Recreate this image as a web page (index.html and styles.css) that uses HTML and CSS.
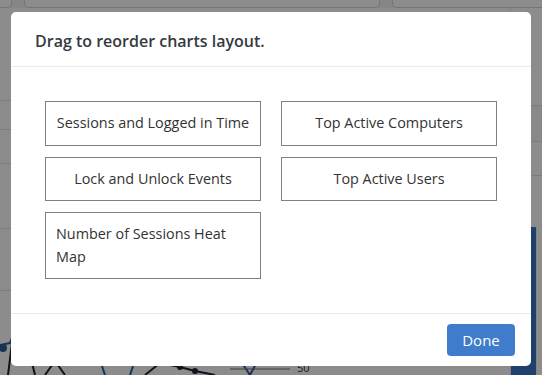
FILE: index.html
```html
<!DOCTYPE html>
<html lang="en">
<head>
<meta charset="utf-8">
<title>Reorder charts</title>
<link rel="stylesheet" href="styles.css">
</head>
<body>
<div class="dash">
  <div class="tiles">
    <div class="tile tile-a"></div>
    <div class="tile tile-b"></div>
    <div class="tile tile-c"></div>
  </div>
  <div class="panels">
    <div class="panel panel-left">
      <div class="prow prow-head"></div>
      <div class="prow prow-cell"><span class="bgtext">2</span></div>
      <div class="prow prow-a"></div>
      <div class="prow prow-b"></div>
      <div class="prow prow-c"></div>
      <svg class="chart" width="330" height="60" viewBox="0 0 330 60">
        <polyline points="0,30 10,28 30,-20" fill="none" stroke="#2d5a9c" stroke-width="2"/>
        <circle cx="3" cy="33" r="4" fill="#2d5a9c"/>
        <polyline points="8,60 12,28 20,-10" fill="none" stroke="#1a2433" stroke-width="2"/>
        <polyline points="35,60 30,40" fill="none" stroke="#1a2433" stroke-width="2"/>
        <polyline points="45,60 55,46 65,60" fill="none" stroke="#1a2433" stroke-width="2"/>
        <circle cx="55" cy="46" r="3" fill="#1a2433"/>
        <polyline points="100,45 105,60" fill="none" stroke="#2d5a9c" stroke-width="2"/>
        <polyline points="135,45 130,60" fill="none" stroke="#2d5a9c" stroke-width="2"/>
        <polyline points="145,60 160,48 180,52 195,56 215,60" fill="none" stroke="#1a2433" stroke-width="2"/>
        <circle cx="160" cy="48" r="3" fill="#1a2433"/>
        <circle cx="180" cy="52" r="3" fill="#1a2433"/>
        <circle cx="195" cy="56" r="3" fill="#1a2433"/>
        <polyline points="240,45 250,60 258,45" fill="none" stroke="#2d5a9c" stroke-width="2"/>
        <line x1="230" y1="54" x2="290" y2="54" stroke="#777" stroke-width="1"/>
        <text x="297" y="57" class="axis">50</text>
      </svg>
    </div>
    <div class="panel panel-right">
      <div class="prow prow-head2"></div>
      <div class="prow prow-cell2"><span class="bgtext">p</span></div>
      <div class="prow prow-d"></div>
      <div class="barwrap"><div class="bar"></div><div class="barrest"></div></div>
    </div>
  </div>
</div>

<div class="backdrop"></div>

<div class="modal" role="dialog" aria-labelledby="modal-title">
  <div class="modal-header">
    <h5 class="modal-title" id="modal-title">Drag to reorder charts layout.</h5>
  </div>
  <div class="modal-body">
    <div class="chart-grid">
      <div class="chart-item"><span>Sessions and Logged in Time</span></div>
      <div class="chart-item"><span>Top Active Computers</span></div>
      <div class="chart-item"><span>Lock and Unlock Events</span></div>
      <div class="chart-item"><span>Top Active Users</span></div>
      <div class="chart-item"><span>Number of Sessions Heat Map</span></div>
    </div>
  </div>
  <div class="modal-footer">
    <button class="btn-done" type="button">Done</button>
  </div>
</div>
</body>
</html>
```
FILE: styles.css
```css
* { box-sizing: border-box; }

html, body {
  margin: 0;
  padding: 0;
  width: 542px;
  height: 375px;
  overflow: hidden;
}

body {
  background: #f4f5f7;
  font-family: "Open Sans", "Noto Sans", "Liberation Sans", sans-serif;
  color: #333;
  position: relative;
}

/* ---------- background dashboard ---------- */
.dash {
  width: 542px;
  height: 375px;
  display: flex;
  flex-direction: column;
}

.tiles {
  display: flex;
  gap: 12px;
  height: 8px;
  flex: none;
}
.tile {
  background: #ffffff;
  border: 1px solid #d4d4d4;
  border-top: none;
  border-radius: 0 0 5px 5px;
}
.tile-a { width: 12px; border-left: none; border-radius: 0 0 5px 0; }
.tile-b { width: 356px; }
.tile-c { flex: 1; border-right: none; border-radius: 0 0 0 5px; }

.panels {
  flex: 1;
  display: flex;
}
.panel {
  background: #ffffff;
  position: relative;
  display: flex;
  flex-direction: column;
}
.panel-left {
  width: 510px;
  flex: none;
}
.panel-right {
  flex: 1;
  border-left: 1px solid #ececec;
}

.prow {
  border-bottom: 1px solid #e2e2e2;
  flex: none;
}
.prow-head { height: 93px; }
.prow-cell { height: 29px; position: relative; }
.prow-a { height: 34px; }
.prow-b { height: 65px; }
.prow-c { height: 62px; }
.prow-head2 { height: 98px; }
.prow-cell2 { height: 36px; background: #fafafa; position: relative; }
.prow-d { height: 34px; }

.bgtext {
  position: absolute;
  left: 16px;
  top: 4px;
  font-size: 17px;
  color: #333;
}
.prow-cell2 .bgtext { left: 0; top: 6px; }

.chart {
  margin-top: auto;
  display: block;
}
.axis {
  font-family: "Open Sans", sans-serif;
  font-size: 11px;
  fill: #333;
}

.barwrap {
  flex: 1;
  display: flex;
  align-items: stretch;
  padding-top: 51px;
}
.bar {
  width: 25px;
  background: #3a73c6;
}
.barrest { flex: 1; border-left: 1px solid #eee; }

.backdrop {
  position: fixed;
  inset: 0;
  background: rgba(0, 0, 0, 0.45);
}

/* ---------- modal ---------- */
.modal {
  position: fixed;
  top: 12px;
  left: 11px;
  width: 520px;
  background: #ffffff;
  border-radius: 5px;
  display: flex;
  flex-direction: column;
}

.modal-header {
  padding: 17px 24px 11px;
  border-bottom: 1px solid #e9ecef;
  height: 55px;
}
.modal-title {
  margin: 0;
  font-size: 16px;
  line-height: 24px;
  font-weight: 600;
  color: #343a40;
}

.modal-body {
  padding: 34px;
}
.chart-grid {
  display: grid;
  grid-template-columns: 216px 216px;
  column-gap: 20px;
  row-gap: 11px;
  align-items: start;
}
.chart-item {
  border: 1px solid #808080;
  padding: 10px;
  display: flex;
  justify-content: center;
  align-items: center;
  font-size: 14.4px;
  line-height: 22.5px;
  color: #333;
}

.modal-footer {
  border-top: 1px solid #e9ecef;
  padding: 10px 16px;
  display: flex;
  justify-content: flex-end;
}
.btn-done {
  height: 32px;
  width: 68px;
  padding: 0;
  border: none;
  border-radius: 4px;
  background: #3f7ccb;
  color: #ffffff;
  font-family: inherit;
  font-size: 15px;
}
```
